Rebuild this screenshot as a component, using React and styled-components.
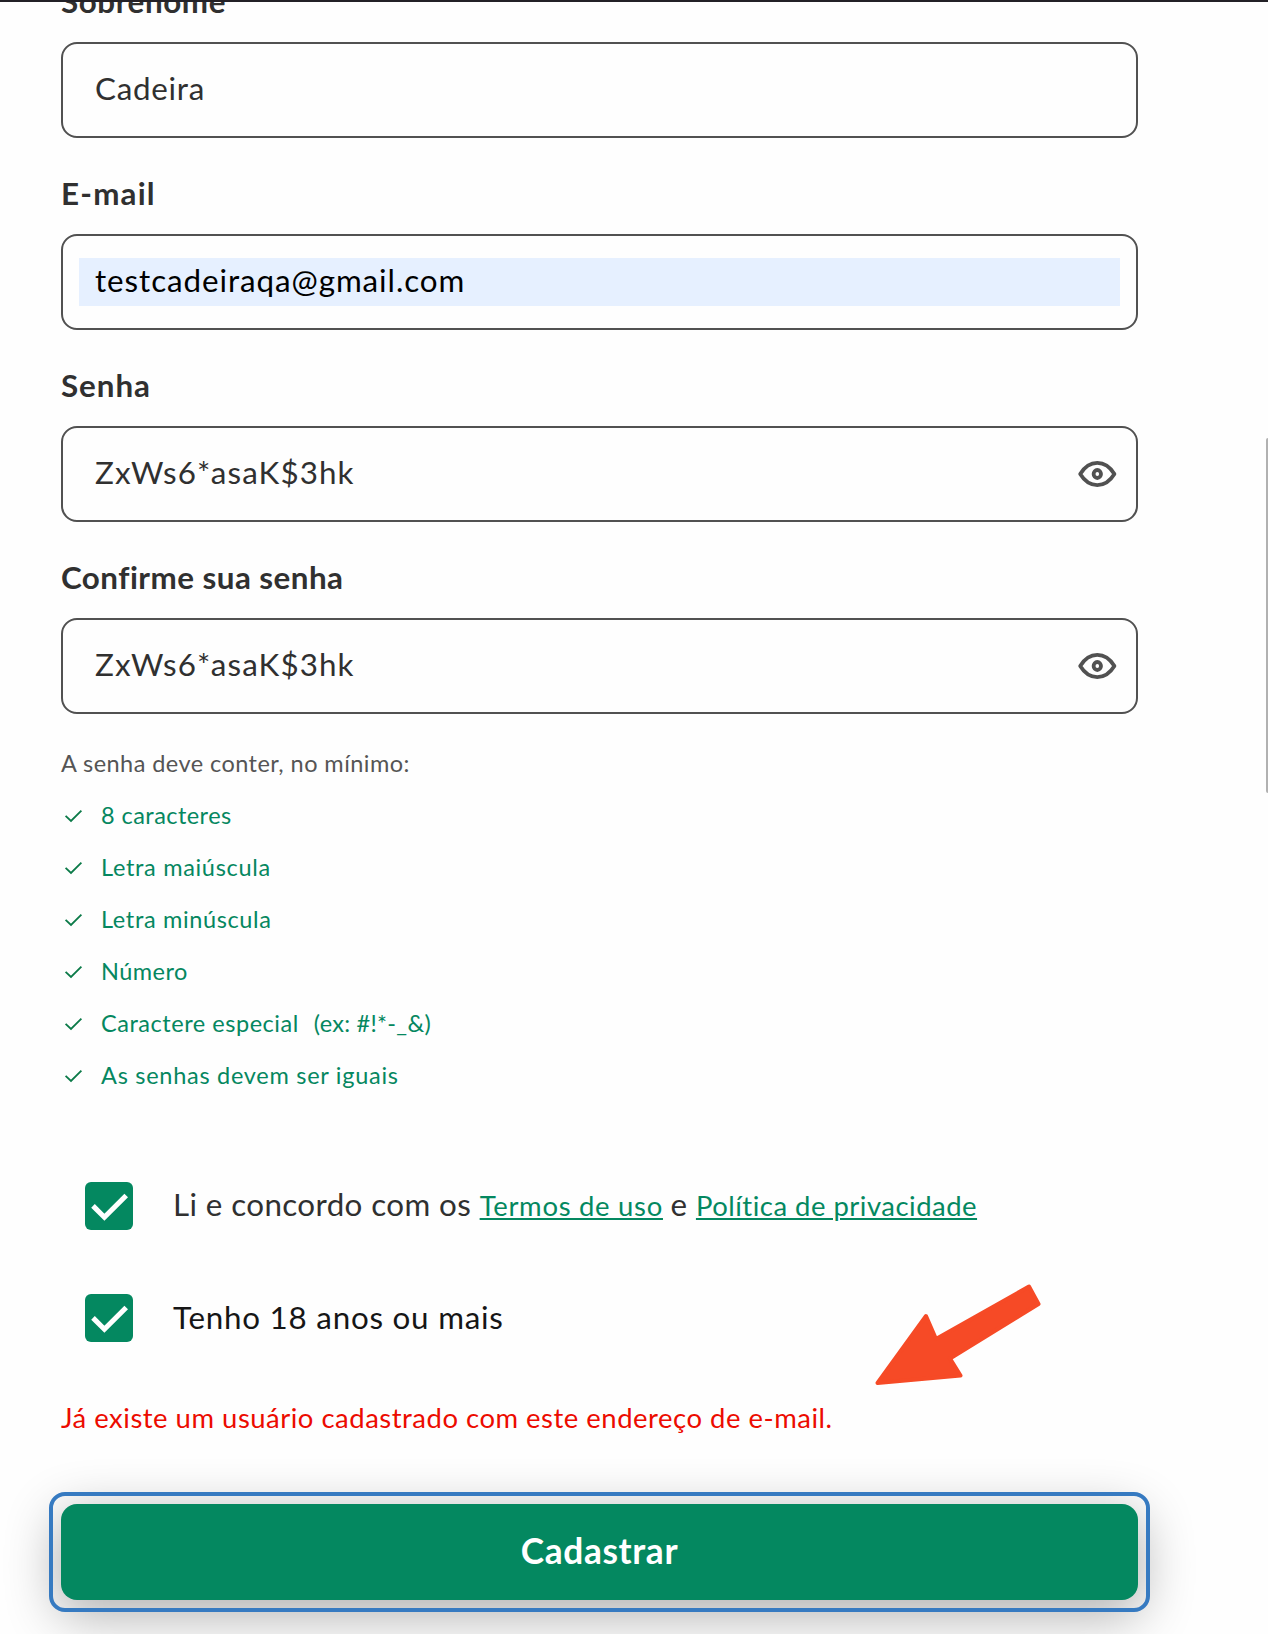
import React from "react";
import styled, { createGlobalStyle } from "styled-components";

const GlobalStyle = createGlobalStyle`
  *, *::before, *::after { box-sizing: border-box; }
  body {
    margin: 0;
    background: #fefefe;
    font-family: Lato, "Open Sans", sans-serif;
    -webkit-font-smoothing: antialiased;
  }
`;

const Page = styled.div`
  position: relative;
  height: 1634px;
  overflow: hidden;
  background: #fefefe;
`;

const TopEdge = styled.div`
  position: absolute;
  inset: 0 0 auto 0;
  height: 2px;
  background: #232127;
`;

const ScrollThumb = styled.div`
  position: absolute;
  top: 438px;
  right: 0;
  width: 2px;
  height: 355px;
  border-radius: 2px 0 0 2px;
  background: #b1b1b1;
`;

const Form = styled.form`
  display: flex;
  flex-direction: column;
  width: 1138px;
  padding-left: 61px;
  margin-top: -20px;
`;

const Fields = styled.div`
  display: flex;
  flex-direction: column;
  gap: 34px;
`;

const Field = styled.div`
  display: flex;
  flex-direction: column;
  gap: 20px;
`;

const Label = styled.label`
  font-size: 31.36px;
  font-weight: 700;
  line-height: 42px;
  letter-spacing: ${(p) => p.$tracking}px;
  white-space: nowrap;
  color: #303030;
`;

const InputBox = styled.div`
  display: flex;
  align-items: center;
  justify-content: space-between;
  height: 96px;
  padding: 0 16px;
  border: 2px solid #515151;
  border-radius: 16px;
`;

const Value = styled.div`
  flex: 1;
  height: 48px;
  padding: 0 16px;
  font-size: 31.36px;
  line-height: 44px;
  letter-spacing: ${(p) => p.$tracking}px;
  color: ${(p) => (p.$autofill ? "#000" : "#303030")};
  background: ${(p) => (p.$autofill ? "#e6f0ff" : "transparent")};
`;

const EyeButton = styled.button`
  display: flex;
  padding: 0;
  margin-right: 1px;
  border: 0;
  background: none;
`;

const Hint = styled.p`
  margin: 23px 0 0;
  font-size: 23.52px;
  line-height: 52px;
  letter-spacing: 0.44px;
  color: #555;
`;

const Rules = styled.ul`
  margin: 0;
  padding: 0;
  list-style: none;
`;

const Rule = styled.li`
  display: flex;
  align-items: center;
  height: 52px;
  gap: 16px;
  font-size: 23.52px;
  line-height: 52px;
  letter-spacing: ${(p) => p.$tracking}px;
  color: #058760;
`;

const RuleExample = styled.span`
  letter-spacing: 0.26px;
  margin-left: -1px;
`;

const Consents = styled.div`
  display: flex;
  flex-direction: column;
  gap: 64px;
  margin-top: 81px;
  padding-left: 24px;
`;

const Consent = styled.div`
  display: flex;
  align-items: center;
  height: 48px;
  gap: 40px;
`;

const CheckBox = styled.span`
  display: flex;
  flex: none;
  width: 48px;
  height: 48px;
  border-radius: 6px;
  background: #048860;
`;

const ConsentText = styled.div`
  display: flex;
  align-items: baseline;
  padding-bottom: 2px;
  font-size: 31.36px;
  line-height: 44px;
  letter-spacing: ${(p) => p.$tracking}px;
  white-space: nowrap;
  color: ${(p) => p.$color};
`;

const Link = styled.a`
  margin: 0 ${(p) => p.$after}px 0 ${(p) => p.$before}px;
  font-size: 27.44px;
  letter-spacing: ${(p) => p.$tracking}px;
  color: #048860;
  text-decoration: underline;
  text-decoration-thickness: 2px;
  text-underline-offset: 2px;
`;

const ErrorText = styled.p`
  margin: 56px 0 66px;
  font-size: 27.44px;
  line-height: 40px;
  letter-spacing: 0.52px;
  white-space: nowrap;
  color: #ec0b00;
`;

const Submit = styled.button`
  position: relative;
  height: 96px;
  padding: 0 0 4px;
  border: 0;
  border-radius: 16px;
  background: #048860;
  box-shadow: 0 13px 52px 4px rgba(0, 0, 0, 0.3);
  font-family: inherit;
  font-size: 35.28px;
  font-weight: 700;
  letter-spacing: 0.62px;
  color: #fff;

  &::after {
    content: "";
    position: absolute;
    inset: -12px;
    border: 4px solid #367ac1;
    border-radius: 16px;
  }
`;

const Arrow = styled.svg`
  position: absolute;
  left: 867px;
  top: 1276px;
`;

const Eye = () => (
  <svg width="44" height="44" viewBox="0 0 44 44" fill="none" stroke="#515151">
    <path
      d="M5.2 22C9 15.8 15 10.9 22.3 10.9S35.6 15.8 39.4 22C35.6 28.2 29.6 33.1 22.3 33.1S9 28.2 5.2 22Z"
      strokeWidth="3.8"
      strokeLinejoin="round"
    />
    <ellipse cx="22.3" cy="22" rx="3.7" ry="4" strokeWidth="3.8" />
  </svg>
);

const ThinCheck = () => (
  <svg width="24" height="24" viewBox="0 0 24 24" fill="none">
    <path d="M4.6 12.8 10 18 20.4 7.6" stroke="#0b7a48" strokeWidth="1.8" />
  </svg>
);

const BoldCheck = () => (
  <svg width="48" height="48" viewBox="0 0 48 48" fill="none">
    <path d="M8 23.9 19.4 35.2 41.2 13.5" stroke="#fff" strokeWidth="5.1" />
  </svg>
);

const fields = [
  { label: "Sobrenome", labelTracking: 0.6, value: "Cadeira", tracking: 0.72 },
  { label: "E-mail", labelTracking: 1.2, value: "testcadeiraqa@gmail.com", tracking: 0.92, autofill: true },
  { label: "Senha", labelTracking: 0.95, value: "ZxWs6*asaK$3hk", tracking: 1.1, secret: true },
  { label: "Confirme sua senha", labelTracking: 0.46, value: "ZxWs6*asaK$3hk", tracking: 1.1, secret: true },
];

const rules = [
  { text: "8 caracteres", tracking: 0.44 },
  { text: "Letra maiúscula", tracking: 0.68 },
  { text: "Letra minúscula", tracking: 0.64 },
  { text: "Número", tracking: 0.46 },
  { text: "Caractere especial", tracking: 0.53, example: "(ex: #!*-_&)" },
  { text: "As senhas devem ser iguais", tracking: 0.72 },
];

export default function App() {
  return (
    <Page>
      <GlobalStyle />
      <Form>
        <Fields>
          {fields.map((f) => (
            <Field key={f.label}>
              <Label $tracking={f.labelTracking}>{f.label}</Label>
              <InputBox>
                <Value $tracking={f.tracking} $autofill={f.autofill}>{f.value}</Value>
                {f.secret && (
                  <EyeButton type="button" aria-label="Mostrar senha">
                    <Eye />
                  </EyeButton>
                )}
              </InputBox>
            </Field>
          ))}
        </Fields>

        <Hint>A senha deve conter, no mínimo:</Hint>
        <Rules>
          {rules.map((r) => (
            <Rule key={r.text} $tracking={r.tracking}>
              <ThinCheck />
              {r.text}
              {r.example && <RuleExample>{r.example}</RuleExample>}
            </Rule>
          ))}
        </Rules>

        <Consents>
          <Consent>
            <CheckBox><BoldCheck /></CheckBox>
            <ConsentText $tracking={0.38} $color="#303030">
              Li e concordo com os
              <Link $before={8.5} $after={7.5} $tracking={0.72}>Termos de uso</Link>
              e
              <Link $before={8.5} $after={0} $tracking={0.51}>Política de privacidade</Link>
            </ConsentText>
          </Consent>
          <Consent>
            <CheckBox><BoldCheck /></CheckBox>
            <ConsentText $tracking={0.76} $color="#161616">
              Tenho 18 anos ou mais
            </ConsentText>
          </Consent>
        </Consents>

        <ErrorText>Já existe um usuário cadastrado com este endereço de e-mail.</ErrorText>
        <Submit type="button">Cadastrar</Submit>
      </Form>

      <Arrow width="180" height="116" viewBox="870 1276 180 116">
        <path
          d="M880.5 1383 929 1316 939 1339 1032 1286.5 1041.5 1304 953 1358.5 963.5 1375.5Z"
          fill="#f64a26"
          stroke="#f64a26"
          strokeWidth="4"
          strokeLinejoin="round"
        />
      </Arrow>
      <TopEdge />
      <ScrollThumb />
    </Page>
  );
}
